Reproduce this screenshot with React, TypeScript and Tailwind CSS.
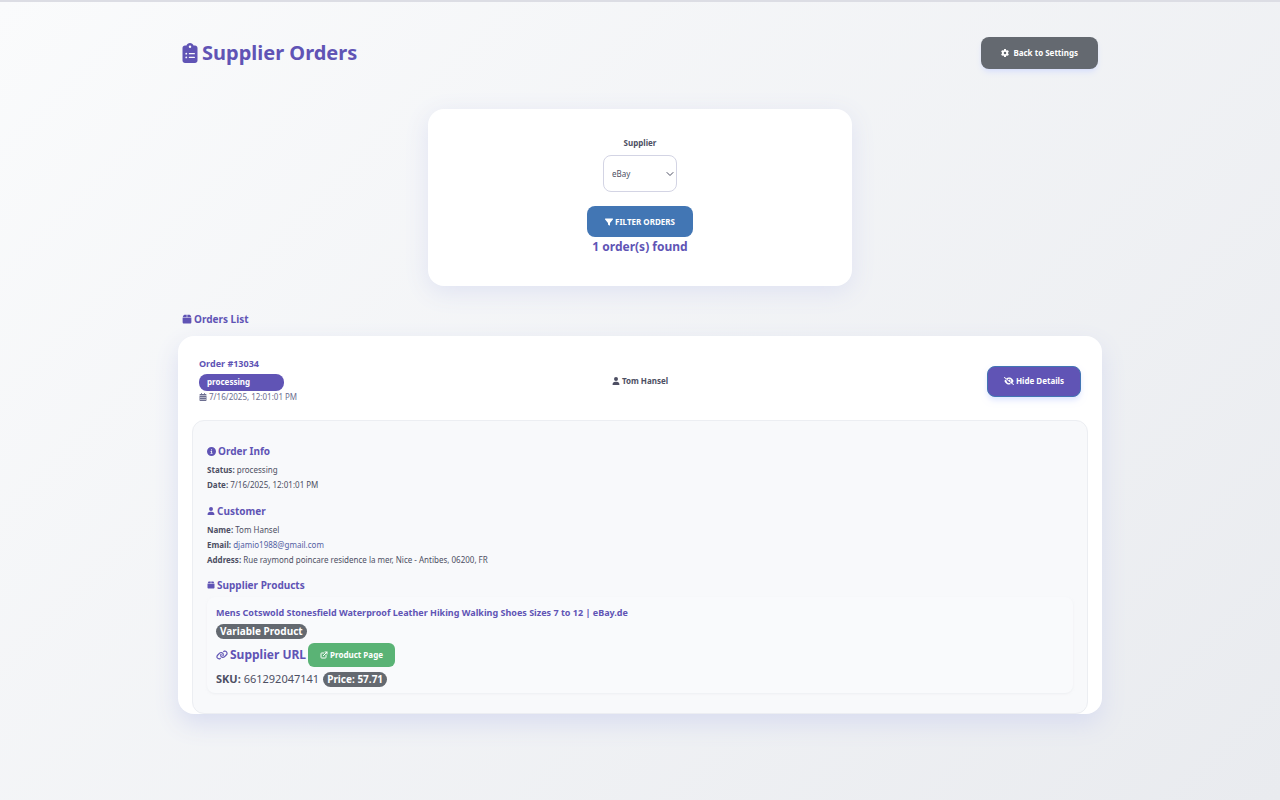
import { ReactNode } from "react";
import {
  FaBox,
  FaCalendarDays,
  FaCircleInfo,
  FaClipboardList,
  FaEyeSlash,
  FaFilter,
  FaGear,
  FaLink,
  FaUser,
} from "react-icons/fa6";
import { FiChevronDown, FiExternalLink } from "react-icons/fi";

const order = {
  id: 13034,
  status: "processing",
  date: "7/16/2025, 12:01:01 PM",
  customer: {
    name: "Tom Hansel",
    email: "djamio1988@gmail.com",
    address: "Rue raymond poincare residence la mer, Nice - Antibes, 06200, FR",
  },
  product: {
    title:
      "Mens Cotswold Stonesfield Waterproof Leather Hiking Walking Shoes Sizes 7 to 12 | eBay.de",
    sku: "661292047141",
    price: "57.71",
  },
};

function SectionTitle({ icon, children }: { icon: ReactNode; children: ReactNode }) {
  return (
    <h4 className="flex items-center gap-0.5 text-[10px] leading-4 font-bold text-[#6054b5]">
      {icon}
      {children}
    </h4>
  );
}

function InfoLine({ label, children }: { label: string; children: ReactNode }) {
  return (
    <p className="text-[8px] leading-[15px]">
      <strong>{label}:</strong> {children}
    </p>
  );
}

function Badge({ children }: { children: ReactNode }) {
  return (
    <span className="inline-flex h-[15px] items-center rounded-full bg-[#646970] px-1 text-[10px] font-bold text-white">
      {children}
    </span>
  );
}

export default function App() {
  return (
    <div className="min-h-screen border-t-2 border-[#dcdde4] bg-linear-135 from-[#fafbfc] to-[#e9ebef] font-['Noto_Sans',sans-serif] text-[#4d4f63]">
      <main className="mx-auto w-full max-w-[924px] pt-[35px] pb-20">
        <header className="flex items-center justify-between pr-1 pl-0.5">
          <h1 className="flex items-center gap-0.5 text-[20px] leading-8 font-bold text-[#6054b5]">
            <FaClipboardList />
            Supplier Orders
          </h1>
          <button
            type="button"
            className="flex h-8 items-center gap-1 rounded-lg bg-[#646970] px-5 text-[8px] font-bold text-white shadow-md shadow-indigo-200/50"
          >
            <FaGear />
            Back to Settings
          </button>
        </header>

        <section className="mx-auto mt-10 flex min-h-[177px] max-w-[424px] flex-col items-center rounded-2xl bg-white pt-[26px] shadow-[0_6px_24px_#dfe2f2]">
          <label htmlFor="supplier" className="text-[8px] leading-4 font-bold">
            Supplier
          </label>
          <div className="relative mt-1">
            <select
              id="supplier"
              defaultValue="ebay"
              className="h-[37px] w-[74px] appearance-none rounded-lg border border-[#d3d4e4] bg-white pl-2 text-[8px]"
            >
              <option value="ebay">eBay</option>
              <option value="amazon">Amazon</option>
            </select>
            <FiChevronDown className="pointer-events-none absolute top-[13px] right-px size-3" />
          </div>
          <button
            type="button"
            className="mt-3.5 flex h-[31px] items-center gap-0.5 rounded-lg bg-[#4276b4] px-[18px] text-[8px] font-bold text-white uppercase"
          >
            <FaFilter />
            Filter Orders
          </button>
          <p className="text-[12px] leading-5 font-bold text-[#6054b5]">1 order(s) found</p>
        </section>

        <h2 className="mt-[25px] flex items-center gap-0.5 pl-1 text-[10px] leading-4 font-bold text-[#6054b5]">
          <FaBox />
          Orders List
        </h2>

        <article className="mt-[9px] rounded-2xl bg-white px-3.5 shadow-[0_10px_24px_#d9ddf0]">
          <div className="grid h-[84px] grid-cols-3 items-center px-[7px] pt-1.5">
            <div className="pb-1">
              <h3 className="text-[9px] leading-4 font-bold text-[#6054b5]">Order #{order.id}</h3>
              <span className="mt-0.5 flex h-[17px] w-[85px] items-center rounded-lg bg-[#6054b5] px-2 text-[8px] font-bold text-white">
                {order.status}
              </span>
              <p className="flex items-center gap-0.5 text-[8px] leading-3 text-[#6c6e90]">
                <FaCalendarDays />
                {order.date}
              </p>
            </div>
            <p className="flex items-center justify-center gap-0.5 text-[8px] leading-4 font-bold">
              <FaUser className="size-2" />
              {order.customer.name}
            </p>
            <button
              type="button"
              className="flex h-[31px] items-center gap-0.5 justify-self-end rounded-lg border border-[#4276b4] bg-[#6054b5] px-4 text-[8px] font-bold text-white shadow-md shadow-indigo-100"
            >
              <FaEyeSlash className="size-2.5" />
              Hide Details
            </button>
          </div>

          <div className="rounded-xl border border-[#eceef2] bg-[#f8f9fb] px-3.5 pt-[22px] pb-5">
            <SectionTitle icon={<FaCircleInfo className="size-[9px]" />}>Order Info</SectionTitle>
            <div className="mt-[3px]">
              <InfoLine label="Status">{order.status}</InfoLine>
              <InfoLine label="Date">{order.date}</InfoLine>
            </div>

            <div className="mt-[11px]">
              <SectionTitle icon={<FaUser className="size-2" />}>Customer</SectionTitle>
            </div>
            <div className="mt-[3px]">
              <InfoLine label="Name">{order.customer.name}</InfoLine>
              <InfoLine label="Email">
                <a href={`mailto:${order.customer.email}`} className="text-[#5361a3]">
                  {order.customer.email}
                </a>
              </InfoLine>
              <InfoLine label="Address">{order.customer.address}</InfoLine>
            </div>

            <div className="mt-2.5">
              <SectionTitle icon={<FaBox className="size-2" />}>Supplier Products</SectionTitle>
            </div>
            <div className="mt-1 rounded-lg bg-[#f9fafc] px-[9px] pt-2 pb-0.5 shadow-xs shadow-gray-200/50">
              <h5 className="text-[9px] leading-4 font-bold text-[#6054b5]">{order.product.title}</h5>
              <div className="flex h-5 items-center">
                <Badge>Variable Product</Badge>
              </div>
              <div className="flex items-center gap-0.5 pt-0.5">
                <span className="flex items-center gap-0.5 text-[12px] font-bold text-[#6054b5]">
                  <FaLink />
                  Supplier URL
                </span>
                <a
                  href="#product"
                  className="flex h-6 items-center gap-0.5 rounded-md bg-[#5ab375] px-3 text-[8px] font-bold text-white"
                >
                  <FiExternalLink strokeWidth={3} className="size-2" />
                  Product Page
                </a>
              </div>
              <div className="flex h-6 items-center gap-1 text-[11px]">
                <span>
                  <strong>SKU:</strong> {order.product.sku}
                </span>
                <Badge>Price: {order.product.price}</Badge>
              </div>
            </div>
          </div>
        </article>
      </main>
    </div>
  );
}
